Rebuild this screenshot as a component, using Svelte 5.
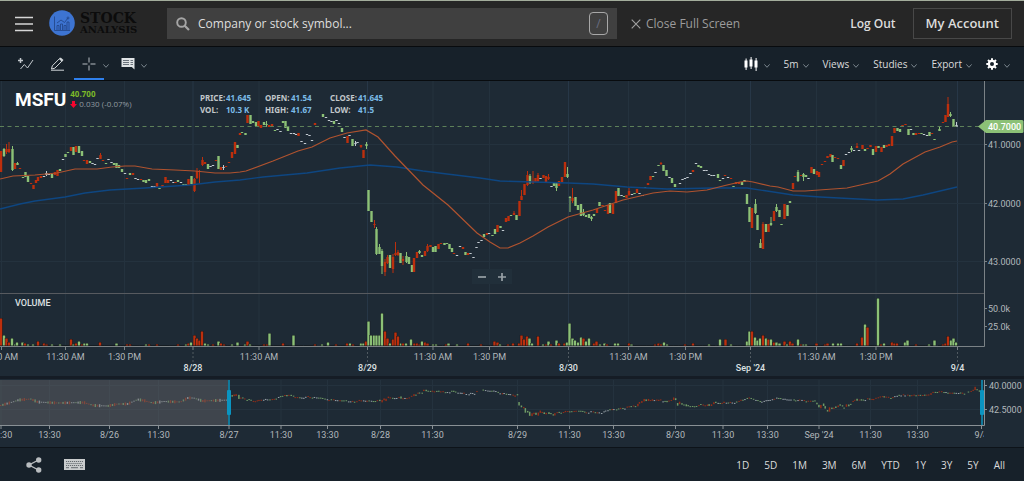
<script>
  // one entry per candle: colour + x, body top, body bottom, then wick high and low where it has one
  const rawCandles = `
    r1 151 172,g4 149 156 148 157,r6.5 149 152 144 154,r9 149 152 142 153,g12.5 149 170 146 171,r15 163 169,g17.5 163 165 162 165,r20 168 169,g23 177 178,g25.5 172 177,g28 176 182,r31 183 184,
    r33.5 185 189,r36 180 183,r38 177 181,r41 176 178,w44 176 177,w46.5 173 175 171 176,w49 174 175,g52 174 178,r55 172 175,r57.5 170 176,g60 169 171,w63 159 160,g65.5 154 157,g68 152 153,
    r71 147 151,g73.5 147 155,r76 146 152,g79 146 153,g82 151 156,r84 160 161,r87 160 164,g90 161 163,w92.5 163 164,w95 164 165,w97.5 158 159,r100.5 155 159 153 159,r103 160 161,g106 163 164,
    w108.5 159 160,w111.5 162 163,g114 163 165,g116.5 163 168,g119 165 168,g122 169 172,w125 173 174,r127 178 179,g130 173 175,r133 173 175,w135.5 178 179,w138 179 180,r141 179 180,
    g143.5 180 182,g146 180 183,g149 179 181,w152 186 187,w154.5 186 187,r157 183 187,g159.5 188 189,r162.5 185 187,r165.5 177 183,r168 180 183,w171 180 181,w173.5 182 183,r175.5 182 183,
    g178 180 182,w181 182 183,g183.5 184 185,g186 184 186,r188.5 179 185,g191.5 176 184,r194.5 179 191 178 192,r197 171 178 168 179,r199.5 171 172 170 184,r202.5 160 165 157 166,r205 162 164,
    g208 164 169,w210.5 166 167,w213 165 166,r216 160 161,g218.5 156 169,r221 167 170,w223.5 167 168 165 170,r226 166 167,r229 162 163,r232 152 158,r235 142 154,g237.5 145 148,r240 133 135,
    g242 132 133,g245.5 133 135,r247.5 115 123,g250.5 115 124,g253 121 123,g256 122 126,r258.5 121 127,r261 125 128,g264 122 125,g266.5 124 125 121 127,r269 125 127,r272 124 126,g275 130 131,
    w277.5 129 130,w280.5 131 132,g283 121 123,g285.5 121 128,g288 126 131,w291 133 134,w294 133 134,w296 134 135,r298.5 133 136,w301.5 141 142,w305 143 144,w307 134 135,w309.5 135 136,
    w312 140 141,r315 123 125,g323 114 117,w326 117 118,w329 120 121,w331.5 121 122,g334 121 124,w336.5 120 121,w339 123 124,g342 128 132,w344.5 137 138,r347.5 136 143,w349.5 135 136,
    g352.5 139 146,w355.5 143 144 141 146,w357.5 142 143,r361 145 147 145 148,r363.5 150 158,g366.5 144 146 142 149,g368.5 190 211,g371.5 211 222,r374.5 224 225 220 228,g376.5 229 254 227 255,
    g379.5 247 254 244 254,g382 251 266 249 274,r385 262 272 259 276,r387.5 257 263 255 264,g390 255 268,r393 257 269 254 273,r395.5 253 255 242 256,r398 252 255 250 256,g400.5 253 263,
    r403 259 261 256 265,g406.5 256 262 252 263,g409 257 264,g412 265 272,r414 258 272,r417 252 258,g419.5 251 253 250 254,g422 255 257,r425 251 256,r427.5 246 251 244 252,r430.5 245 247,
    g433 247 252,g435.5 246 252,r438.5 244 249,r441 243 244,g444.5 243 245,g447 243 244,g449.5 244 249,g452 248 252,r454 253 254,w457 255 256,w460 246 247,r463 247 249,g465.5 252 255,r468 253 255,
    w470.5 253 254,w473.5 257 258,w476.5 247 248,w478.5 242 243,w481.5 240 241,g484 234 237,r487 233 235,w489 233 234,g492.5 235 236,g495 229 234,r497.5 225 232,g500.5 226 228,w503 230 231,
    r506 218 222,r508.5 216 221,g511 215 216,r514 213 215 211 215,g516.5 215 220,r519.5 201 216,r521.5 196 200 190 200,r524.5 184 195,r527.5 175 185 171 186,g530 176 183 174 184,r533 181 183 171 184,
    r535.5 178 182,r538 175 181 173 182,w540.5 178 179,r543.5 175 178,r546 176 183,r548.5 177 179 174 180,w551.5 186 187,g554 183 186,g556.5 183 188 183 191,r559 181 186,r562 177 182,r565 162 177,
    g567.5 174 177 167 178,g570 197 198 196 212,r572.5 198 201 188 203,g575.5 197 206,g578 205 210,g581 204 216,g583.5 212 215 209 216,g586 215 217,g589 214 218,g591.5 217 219 216 221,g594 214 216,
    r597 209 213,g599.5 202 206,r602.5 205 206,r605 210 211,r608 205 214,g610 203 213,r613 204 214,r616 191 203,g618.5 188 196,w621.5 195 196,g624 196 197,r626.5 195 198,r629 191 195 188 196,
    w632 194 195,g634.5 193 194,r637 189 193,w639.5 193 194,w642.5 195 196,g645 187 188,r648 183 185,r650.5 176 180,g653 176 177,w655.5 172 173,g658.5 165 166,r661 163 164 162 165,g663.5 165 171,
    g666.5 170 176,w669.5 177 178,g672 178 183,g675 184 187,w677 188 189,w680 183 184,w682.5 179 180,w685 178 179,w687.5 177 178,w690.5 173 174,r693 170 172,w696 163 164,g698.5 165 167,g701 166 168,
    w704 170 171,w706.5 170 171,w709 174 175,w711.5 175 176,w714 175 176,g718 174 178,g720 180 181,w723 178 179,r725 175 176,w728 177 178,r731 178 179,g733.5 186 187,r736 182 184,r739 182 184,
    g742 182 185,g744.5 180 182,g747 194 204,g749.5 207 222,r752 208 228,g755.5 204 213 199 214,g757.5 215 230,g760.5 243 248 239 248,r763 224 249 222 249,g766 224 232,r768.5 224 232,
    g771 223 225 217 226,r774 211 221,g776.5 207 211 204 212,g779.5 210 217,g781.5 224 225,r784.5 204 219,g787.5 205 216,g790 201 203,r793 183 189,r795 176 177,g798 172 181 170 182,r801 175 176,
    g803.5 174 177 173 181,g806 175 177,w808.5 178 179,r811.5 167 173,g814 169 174,r817 171 175,r819 172 177,r822 164 165,r825 161 162,r827.5 156 158,r830.5 154 157,g832.5 155 162,r835 157 158,
    r838 158 159,g841 165 169,r843.5 160 166,w846 154 155,w849 152 153,g851.5 148 150 146 152,w854 150 151,r857 146 148 143 148,w859 150 151,r862.5 145 149,g865 149 151,r867.5 148 149,r870.5 145 147,
    g873 149 155,r876 146 152,g878.5 146 148,r881.5 147 152,g884 145 148,r886.5 145 147,r889 144 146,r892 136 146,r894.5 128 133,g897.5 128 131,g900 129 132,r902.5 125 127,r905.5 124 125,
    g908.5 129 135,w911 129 130,g913.5 133 135,r916 133 135,r919 133 134,g921.5 133 134,w924 134 135,w927 135 136,g929.5 132 136,r932 133 134,g934.5 139 140,g939.5 129 131 126 131,r943 122 123,
    r945.5 115 122,r948 104 117 97 117,g950.5 114 116 112 117,g953.5 119 127,w956.5 125 127 122 127`;

  const rawVolume = `
    r1 27,g4 10,r6.5 7,r9 3,g12 7,g15 1,g17 3,g22.5 3,r25 2,g28 1,g33 1,r38 4,r44 2,r46.5 1,g52 1,g60 1,r71 6,g73.5 1,r76 2,g79 4,r82 1,g84.5 2,g87 2,r100 3,g116.5 2,r127 1,r130 1,g146 1,r149 1,
    r157 1,r178 1,g186 1,r188.5 2,g191 3,r194.5 10,r197 7,r199.5 5,r202 14,g205 2,g208 1,r213 1,g218.5 4,r221 2,r224 1,g232 1,g237.5 3,g245 1,r247.5 4,g250 1,r264 1,r267 1,g269.5 12,r283 2,g293.5 10,
    r315 1,g322 1,g328 3,r336 1,r347 2,g350 2,r353 1,g361 2,g363.5 2,r366 4,g368.5 24,g371 10,g374 10,g376.5 10,g379.5 10,g382 32,r385 14,r387.5 7,g390 2,r393 6,r395.5 13,r398 9,g401 2,r403 2,
    g406 2,g411 6,r414.5 2,r417 2,r419.5 1,g422 4,r425 3,r427.5 2,g433 1,g436 1,r446 1,g448.5 2,g457 1,r468 2,r481 1,r494.5 4,r497.5 3,g500 1,r508 1,r513 2,r519 2,r521.5 10,r524 6,r527 9,g529.5 7,
    g532 2,r538 9,g543 1,r546 1,g548.5 4,r551 1,g556.5 5,r559 2,r564.5 2,g567 3,g569.5 22,g572.5 7,g575 5,g578 3,g581 8,r583.5 7,g586 4,g589 7,r594 2,r596.5 4,g600 1,g604.5 2,r607 1,g615 2,g618 2,
    r629 2,g631.5 1,r655 1,r658.5 2,r661 1,g664 3,g667 1,r685 1,r693 2,g709 1,g720 6,r725.5 6,g731 1,g747 4,g749.5 14,r752 14,g755 8,g757.5 5,g760 7,r763 10,g766 7,r768.5 6,g771 6,r774 3,g776.5 3,
    g779.5 2,r784.5 4,g787 1,r790 4,r792.5 2,g798 6,r801 1,g803.5 1,g806 1,r816.5 2,r825 1,r827.5 2,g833 2,g838 2,g841 2,r857 2,r862 8,g865 21,r867.5 18,g878 47,r881 1,g884 2,r892 3,r894.5 2,r897 2,
    g905 3,g907.5 5,r916 1,g929 1,g934.5 5,r943 1,r945.5 2,r948 9,g951 5,g953.5 7,g956 3`;

  const parse = (raw) =>
    raw.split(',').map((item) => {
      const s = item.trim();
      return { c: s[0], v: s.slice(1).split(' ').map(Number) };
    });

  const colors = { r: '#bd2f0d', g: '#8cc176', w: '#c3cbd1' };

  const candles = parse(rawCandles).map(({ c, v }) => ({ c, x: v[0], top: v[1], bottom: v[2], hi: v[3], lo: v[4] }));
  const volume = parse(rawVolume).map(({ c, v }) => ({ c, x: v[0], h: v[1] }));

  // the navigator draws the same candles, scaled down
  const navX = (x) => 229 + x * 0.787;
  const navY = (y) => 394.5 + (y - 144) * 0.164;

  // older price history, only visible in the navigator
  const history = [
    [0, 405.5], [5, 404], [12, 402], [18, 400], [30, 399], [37, 402], [57, 403], [83, 402.5], [93, 405.5], [107, 406],
    [117, 404], [127, 404], [137, 399.5], [143, 400.5], [152, 403], [163, 401.5], [180, 402], [187, 398], [193, 398],
    [202, 401], [229, 400]
  ];
  const oldCandles = [];
  let seg = 0;
  for (let i = 0; i < 106; i++) {
    const x = i * 2.15;
    while (x > history[seg + 1][0]) seg++;
    const [x0, y0] = history[seg];
    const [x1, y1] = history[seg + 1];
    const y = y0 + ((x - x0) / (x1 - x0)) * (y1 - y0);
    oldCandles.push({ x, y, h: [1, 2, 1, 3, 1, 2, 3][(i * 5) % 7], c: 'rgwgrwr'[(i * 3 + (i >> 2)) % 7] });
  }

  const ma50 = '0,179 13,176 35,175 57,173 75,169 97,169 112,167 125,166 135,166 152,169 175,170 195,171 215,173 230,173 240,172 246,171 273,161 298,151 312,147 330,138 347,133 366,130 378,137 395,156 423,185 448,205 477,233 490,242 500,248 508,248 520,243 533,236 548,227 568,217 593,210 623,200 653,193 670,191 687,192 707,190 727,185 740,182 747,181 753,182 770,186 778,187 793,191 805,191 847,188 878,181 890,174 903,164 925,152 940,147 952,142 957,141';
  const ma200 = '0,209 20,204 35,201 65,197 85,193 110,190 145,188 190,185 215,182 240,180 263,177 307,173 340,168 370,165 397,167 423,171 447,174 480,178 500,181 533,182 568,183 593,184 627,187 667,189 713,188 747,188 767,191 793,195 820,197 877,200 903,199 923,195 957,187';

  const ticks = [
    [1.5, '9:30 AM'], [65.5, '11:30 AM'], [124.5, '1:30 PM'], [193, '8/28', true], [259, '11:30 AM'], [367.5, '8/29', true],
    [433, '11:30 AM'], [489.5, '1:30 PM'], [568.5, '8/30', true], [628.5, '11:30 AM'], [685.5, '1:30 PM'],
    [750.5, "Sep '24", true], [816.5, '11:30 AM'], [876, '1:30 PM'], [957.5, '9/4', true]
  ];
  const navTicks = [
    [1, '11:30'], [49.5, '13:30'], [109.5, '8/26'], [158.5, '11:30'], [229, '8/27'], [281, '11:30'], [327.5, '13:30'],
    [380.5, '8/28'], [432.5, '11:30'], [517.5, '8/29'], [569.5, '11:30'], [613.5, '13:30'], [675.5, '8/30'],
    [723, '11:30'], [767.5, '13:30'], [819, "Sep '24"], [870.5, '11:30'], [917.5, '13:30'], [981.5, '9/4']
  ];

  const ranges = ['1D', '5D', '1M', '3M', '6M', 'YTD', '1Y', '3Y', '5Y', 'All'];
  const menus = ['5m', 'Views', 'Studies', 'Export'];
</script>

{#snippet chevron()}
  <svg class="chevron" width="6" height="4" viewBox="0 0 6 4"><path d="M.4.4 3 3.3 5.6.4" fill="none" stroke="#7b868e" /></svg>
{/snippet}

<div class="page">
  <header>
    <button class="menu" aria-label="Menu">
      <svg width="18" height="16" viewBox="0 0 18 16"><path d="M0 1.5h18M0 8h18M0 14.5h18" stroke="#d6d6d6" stroke-width="1.6" /></svg>
    </button>
    <a class="logo" href="/">
      <svg width="26" height="26" viewBox="0 0 26 26">
        <circle cx="13" cy="13" r="12.8" fill="#3d74d2" />
        <g fill="none" stroke="#24488c" stroke-width=".9">
          <path d="M5.5 6.5v14h15.500M8 20v-4.500h2V20M11.500 20v-6h2v6M15 20v-4.500h2V20M18 20v-8h2v8M8 13l4-3 3.500 2.500L19 8" />
          <circle cx="19" cy="8" r="1" />
        </g>
      </svg>
      <span><b>STOCK</b><small>ANALYSIS</small></span>
    </a>
    <label class="search">
      <svg width="14" height="14" viewBox="0 0 14 14" fill="none" stroke="#a6a6a6"><circle cx="5.500" cy="5.500" r="4.300" stroke-width="1.900" /><path d="m8.700 8.700 4.300 4.300" stroke-width="2.200" /></svg>
      <input type="text" placeholder="Company or stock symbol..." aria-label="Company or stock symbol" />
      <kbd>/</kbd>
    </label>
    <button class="close">
      <svg width="10" height="10" viewBox="0 0 10 10"><path d="m.7.700 8.600 8.600M9.300.700.700 9.300" stroke="#a0a0a0" stroke-width="1.100" /></svg>
      Close Full Screen
    </button>
    <a class="logout" href="/logout">Log Out</a>
    <a class="account" href="/account">My Account</a>
  </header>

  <nav class="toolbar">
    <div class="tools">
      <button aria-label="Add study">
        <svg width="17" height="14" viewBox="0 0 17 14" fill="none" stroke="#c3c9cd"><path d="M3.500 1v5M1 3.500h5" stroke-width="1.500" /><path d="m3.500 12 3.800-4.500 3.200 3.500L16 3" /></svg>
      </button>
      <button aria-label="Draw">
        <svg width="15" height="14" viewBox="0 0 15 14" fill="none" stroke="#d0d5d8"><path d="m1.500 12 .8-3.200L9.800 1.300l2.600 2.400-7.600 7.500z" /><path d="m9 2 1.700-1.600 2.800 2.600L11.800 4.700z" fill="#d0d5d8" stroke="none" /><path d="M1 13.200h13" /></svg>
      </button>
      <button class="active" aria-label="Crosshair">
        <svg width="14" height="14" viewBox="0 0 14 14"><path d="M7 .500v5M7 8.500v5M.500 7h5M8.500 7h5" stroke="#b8bec3" /></svg>
      </button>
      <button class="drop" aria-label="Crosshair options">{@render chevron()}</button>
      <button class="note" aria-label="Info">
        <svg width="14" height="12" viewBox="0 0 14 12"><path d="M.500 0h13v11.500L10.800 9H.500z" fill="#dfe3e5" /><path d="M2 2.500h6M2 4.500h6M2 6.500h6M9.500 2.500H12M9.500 4.500H12M9.500 6.500H12" stroke="#4b565f" stroke-width=".8" /></svg>
        {@render chevron()}
      </button>
    </div>
    <div class="menus">
      <button aria-label="Chart type">
        <svg width="14" height="14" viewBox="0 0 14 14" fill="#fff"><path d="M.5 3.500h3v7h-3zM5.500 2.500h3v7h-3zM10.500 3.500h3v7h-3zM1.600 1.500h1V13h-1zM6.600 0h1v12h-1zM11.600 1h1v13h-1z" /></svg>
        {@render chevron()}
      </button>
      {#each menus as menu}
        <button>{menu}{@render chevron()}</button>
      {/each}
      <button aria-label="Settings">
        <svg width="12" height="12" viewBox="0 0 12 12"><circle cx="6" cy="6" r="3.100" fill="none" stroke="#fff" stroke-width="2.200" /><path d="M6 .300V3M6 9v2.700M.300 6H3M9 6h2.700M2 2l1.600 1.600M8.400 8.400 10 10M2 10l1.600-1.600M8.400 3.600 10 2" stroke="#fff" stroke-width="2" /></svg>
        {@render chevron()}
      </button>
    </div>
  </nav>

  <main>
    <svg class="plot" viewBox="0 81 1024 295">
      <!-- grid -->
      <g>
        {#each ticks as [x, label, day]}
          <line x1={x} x2={x} y1="81" y2="346" stroke={day ? '#273747' : '#24323e'} />
        {/each}
        {#each [144.5, 203.5, 261.5] as y}
          <line x1="0" x2="984" y1={y} y2={y} stroke="#24323e" />
        {/each}
      </g>

      <!-- price -->
      {#each candles as k}
        {#if k.hi}
          <rect x={k.x - 0.5} y={k.hi} width="1" height={k.lo - k.hi} fill={colors[k.c]} />
        {/if}
        <rect x={k.x - 1.2} y={k.top} width="2.4" height={k.bottom - k.top} fill={colors[k.c]} />
      {/each}
      <polyline points={ma200} fill="none" stroke="#0e4681" stroke-width="1.3" />
      <polyline points={ma50} fill="none" stroke="#b0532f" stroke-width="1.2" />
      <line x1="0" x2="980" y1="126.5" y2="126.5" stroke="#5d8059" stroke-dasharray="4 3.500" />

      <!-- volume -->
      {#each candles as k}
        <rect x={k.x - 1.5} y="345" width="3" height="1" fill="#151c22" />
      {/each}
      {#each volume as k}
        <rect class="bar" x={k.x - 1.2} y={345.5 - k.h} width="2.400" height={k.h} fill={colors[k.c]} />
      {/each}
      <text class="pane" x="15" y="306">VOLUME</text>

      <!-- axes -->
      <path d="M0 293.500H984" stroke="#575a5f" />
      <path d="M0 346.500H984.500V81" fill="none" stroke="#7b8286" />
      {#each ticks as [x, label, day]}
        <line x1={x} x2={x} y1="347" y2="350" stroke="#7b8286" />
        {#if day}
          <line x1={x} x2={x} y1="352" y2="362" stroke="#505a61" stroke-dasharray="2 2" />
        {/if}
        <text x={x} y={day ? 371 : 360} text-anchor="middle" class:day>{label}</text>
      {/each}
      {#each [[144.5, '41.0000'], [203.5, '42.0000'], [261.5, '43.0000'], [308.5, '50.0k'], [326.5, '25.0k']] as [y, label]}
        <line x1="985" x2="987" y1={y} y2={y} stroke="#7b8286" />
        <text x="988" y={y + 3}>{label}</text>
      {/each}
      <path d="M978 126.500 986 120h36q1.500 0 1.500 1.500v10q0 1.500-1.500 1.500h-36z" fill="#8cc176" />
      <text class="last" x="988" y="130">40.7000</text>
    </svg>

    <section class="quote">
      <h1>MSFU</h1>
      <div>
        <strong>40.700</strong>
        <p>
          <svg width="7" height="7" viewBox="0 0 7 7"><path d="M2 0h3v3h2L3.500 7 0 3h2z" fill="#f5052f" /></svg>
          0.030 (-0.07%)
        </p>
      </div>
    </section>

    <dl class="hud">
      <dt>PRICE:</dt><dd>41.645</dd>
      <dt>OPEN:</dt><dd>41.54</dd>
      <dt>CLOSE:</dt><dd>41.645</dd>
      <dt>VOL:</dt><dd>10.3 K</dd>
      <dt>HIGH:</dt><dd>41.67</dd>
      <dt>LOW:</dt><dd>41.5</dd>
    </dl>

    <div class="zoom">
      <button aria-label="Zoom out"><svg width="8" height="8" viewBox="0 0 8 8"><path d="M0 4h8" stroke="#98a1a6" stroke-width="1.700" /></svg></button>
      <button aria-label="Zoom in"><svg width="8" height="8" viewBox="0 0 8 8"><path d="M0 4h8M4 0v8" stroke="#98a1a6" stroke-width="1.700" /></svg></button>
    </div>
  </main>

  <section class="navigator">
    <svg class="plot" viewBox="0 379 1024 68">
      <clipPath id="navArea"><rect x="0" y="379" width="984" height="68" /></clipPath>
      <g stroke="#24323e">
        {#each navTicks as [x]}
          <line x1={x} x2={x} y1="380" y2="425" />
        {/each}
        <path d="M0 385.500H984M0 409.500H984" />
      </g>
      <g opacity=".75">
        {#each candles as k}
          <rect x={navX(k.x) - 0.7} y={navY(k.hi || k.top)} width="1.500" height={Math.max(1, ((k.lo || k.bottom) - (k.hi || k.top)) * 0.164)} fill={colors[k.c]} />
        {/each}
        {#each oldCandles as k}
          <rect x={k.x} y={k.y - k.h / 2} width="1.400" height={k.h} fill={colors[k.c]} />
        {/each}
      </g>
      <rect x="0" y="380" width="229" height="45" fill="#6a6a6c" opacity=".43" />
      <path d="M0 425.500H984.500V380" fill="none" stroke="#899095" />
      <g clip-path="url(#navArea)">
        {#each navTicks as [x, label]}
          <line x1={x} x2={x} y1="426" y2="429" stroke="#899095" />
          <text x={x} y="438" text-anchor="middle">{label}</text>
        {/each}
      </g>
      {#each [[385.5, '40.0000'], [409.5, '42.5000']] as [y, label]}
        <line x1="985" x2="987" y1={y} y2={y} stroke="#899095" />
        <text x="989" y={y + 3}>{label}</text>
      {/each}
      {#each [229, 982] as x}
        <rect x={x - 1} y="380" width="2" height="45" fill="#11799b" />
        <rect x={x - 2} y="390" width="4" height="25" rx="1" fill="#0a94c1" />
      {/each}
    </svg>
  </section>

  <footer>
    <button aria-label="Share">
      <svg width="16" height="16" viewBox="0 0 16 16" fill="#b9bdc0"><path d="M12.500 3 3 8l9.500 5" fill="none" stroke="#b9bdc0" stroke-width="1.400" /><circle cx="12.700" cy="3" r="2.700" /><circle cx="3" cy="8" r="2.700" /><circle cx="12.700" cy="13" r="2.700" /></svg>
    </button>
    <button aria-label="Keyboard shortcuts">
      <svg width="21" height="11" viewBox="0 0 21 11"><rect width="21" height="11" fill="#c9cccd" /><path d="M2 2.500h17M2.500 4.500h16M2 6.500h17" stroke="#4a5157" stroke-width=".8" stroke-dasharray="1.200 .8" /><path d="M2 8.700h3M7 8.700h7M16 8.700h3" stroke="#4a5157" stroke-width=".8" /></svg>
    </button>
    <div class="ranges">
      {#each ranges as range}
        <button>{range}</button>
      {/each}
    </div>
  </footer>
</div>

<style>
  :global(body) {
    margin: 0;
    background: #17212a;
  }

  .page {
    font-family: 'Open Sans', 'Noto Sans', sans-serif;
    color: #dcdcdc;
  }

  .page * {
    box-sizing: border-box;
  }

  button {
    display: flex;
    align-items: center;
    padding: 0;
    border: 0;
    background: none;
    color: inherit;
    font: inherit;
    cursor: pointer;
  }

  a {
    color: inherit;
    text-decoration: none;
  }

  svg {
    display: block;
    flex: none;
  }

  header {
    display: flex;
    align-items: center;
    height: 46px;
    padding: 0 12px 0 15px;
    border-top: 1px solid #a3ad9c;
    background: #262626;
  }

  .logo {
    display: flex;
    align-items: center;
    width: 118px;
    margin: 0 0 0 16px;
    gap: 5px;
    color: #0c0c0c;
    font-family: 'DejaVu Serif', serif;
    font-weight: bold;
  }

  .logo svg {
    margin-top: -2px;
  }

  .logo b,
  .logo small {
    display: block;
    font-size: 14px;
    line-height: 13px;
  }

  .logo small {
    font-size: 10px;
    line-height: 10px;
  }

  .search {
    display: flex;
    align-items: center;
    flex: 1;
    max-width: 450px;
    height: 31px;
    padding: 0 9px;
    gap: 8px;
    background: #404040;
  }

  .search input {
    flex: 1;
    min-width: 0;
    padding: 0;
    border: 0;
    outline: 0;
    background: none;
    color: #e0e0e0;
    font: 12px 'Open Sans', sans-serif;
  }

  .search input::placeholder {
    color: #dedede;
  }

  kbd {
    width: 19px;
    height: 23px;
    border: 1px solid #a8a8a8;
    border-radius: 4px;
    color: #686d80;
    font: 12px/21px 'Open Sans', sans-serif;
    text-align: center;
  }

  .close {
    gap: 5px;
    margin: 0 auto 0 14px;
    color: #9c9c9c;
    font-size: 12px;
    font-weight: 500;
  }

  .logout {
    margin-right: 17px;
    font-size: 12px;
    font-weight: 600;
  }

  .account {
    height: 31px;
    padding: 0 12px;
    border: 1px solid #484848;
    font-size: 13px;
    font-weight: 600;
    line-height: 29px;
  }

  .toolbar {
    display: flex;
    justify-content: space-between;
    height: 35px;
    padding: 0 14px 0 10px;
    border: solid #080b0e;
    border-width: 1px 0;
    background: #17212a;
    font-size: 10px;
  }

  .tools,
  .menus {
    display: flex;
  }

  .tools button {
    justify-content: center;
    width: 30px;
    margin-right: 2px;
  }

  .tools button.active {
    border-bottom: 2px solid #2f80ed;
    padding-top: 2px;
    margin-right: 0;
  }

  .tools button.drop {
    width: 4px;
    margin-right: 8px;
  }

  .tools button.note {
    width: 36px;
    gap: 6px;
  }

  .menus {
    gap: 14px;
  }

  .menus button {
    gap: 4px;
  }

  .menus button:first-child,
  .menus button:last-child {
    gap: 6px;
  }

  .chevron {
    margin-top: 5px;
  }

  main {
    position: relative;
    background: #1e2a35;
  }

  .plot {
    width: 100%;
    height: auto;
  }

  .plot text {
    fill: #b2b8bc;
    font: 9px Roboto, sans-serif;
  }

  .plot .day,
  .plot .pane {
    fill: #dde0e2;
    font-weight: 500;
  }

  .plot .last {
    fill: #fff;
    font-weight: 500;
  }

  .bar {
    stroke: #141b20;
    stroke-width: 1;
    paint-order: stroke;
  }

  .quote {
    position: absolute;
    top: 8px;
    left: 15px;
    display: flex;
    gap: 4px;
    font-size: 8px;
    line-height: 10px;
  }

  h1 {
    margin: 0;
    color: #fff;
    font: bold 19px/22px Roboto, sans-serif;
  }

  .quote strong {
    color: #7cb928;
  }

  .quote p {
    display: flex;
    align-items: center;
    gap: 2px;
    margin: 0;
    color: #929ba1;
  }

  .hud {
    position: absolute;
    top: 11px;
    left: 200px;
    display: grid;
    grid-template-columns: 26px 39px 26px 39px 28px 40px;
    margin: 0;
    color: #c2c7ca;
    font: bold 8px/12px 'Noto Sans', sans-serif;
    white-space: nowrap;
  }

  dd {
    margin: 0;
    color: #7cbce8;
  }

  .zoom {
    position: absolute;
    top: 188px;
    left: 48%;
    display: flex;
    transform: translateX(-50%);
    background: #212f3a;
  }

  .zoom button {
    width: 20px;
    height: 15px;
    justify-content: center;
  }

  .navigator {
    border-top: 3px solid #151c25;
    border-bottom: 1px solid #0d1319;
    background: #1e2a35;
  }

  footer {
    display: flex;
    align-items: center;
    gap: 22px;
    height: 33px;
    padding: 0 19px 0 26px;
    background: #17212a;
    font-size: 10px;
  }

  .ranges {
    display: flex;
    gap: 15px;
    margin-left: auto;
  }
</style>
